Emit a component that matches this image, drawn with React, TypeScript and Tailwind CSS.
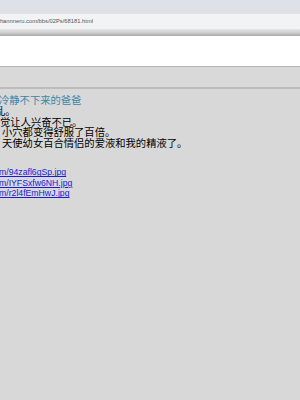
import React from "react";

export default function App() {
  const cjk = { fontFamily: '"Noto Sans CJK SC", "Noto Sans", sans-serif' };
  return (
    <div className="w-[300px] h-[400px] overflow-hidden bg-[#d8d8d8] flex flex-col">
      <div className="h-[14px] bg-[#dee1e7] shrink-0" />
      <div className="h-[15px] bg-[#f2f3f5] shrink-0 flex items-center overflow-hidden">
        <span
          className="text-[5.8px] leading-none text-[#555] ml-[-3px] whitespace-nowrap"
          style={{ fontFamily: '"Liberation Sans", Arial, sans-serif' }}
        >
          channneru.com/bbs/02Ps/68181.html
        </span>
      </div>
      <div className="h-[7px] shrink-0 bg-gradient-to-b from-[#e6e6e6] via-[#cfcfcf] to-[#a9a9a9]" />
      <div className="h-[30px] bg-white shrink-0" />
      <div className="h-[1px] bg-[#b3b3b3] shrink-0" />
      <div className="h-[20px] bg-[#d9d9d9] shrink-0" />
      <div className="h-[2px] bg-[#bcbcbc] shrink-0" />
      <div className="pt-[6px] text-[10.3px] leading-[10.8px] text-black overflow-hidden whitespace-nowrap" style={cjk}>
        <div className="text-[#3d86a8] ml-[-1px]">冷静不下来的爸爸</div>
        <div className="ml-[-5px]">乱。</div>
        <div className="ml-[0px]">觉让人兴奋不已。</div>
        <div className="ml-[2px]">小穴都变得舒服了百倍。</div>
        <div className="ml-[2px]">天使幼女百合情侣的爱液和我的精液了。</div>
        <div
          className="mt-[18.5px] flex flex-col text-[8.7px] leading-[10.5px]"
          style={{ fontFamily: '"Liberation Sans", Arial, sans-serif' }}
        >
          <a className="text-[#1a1adb] underline ml-[-1px]" href="#">m/94zafl6gSp.jpg</a>
          <a className="text-[#1a1adb] underline ml-[-1px]" href="#">m/IYFSxfw6NH.jpg</a>
          <a className="text-[#1a1adb] underline ml-[-1px]" href="#">m/r2l4fEmHwJ.jpg</a>
        </div>
      </div>
    </div>
  );
}
